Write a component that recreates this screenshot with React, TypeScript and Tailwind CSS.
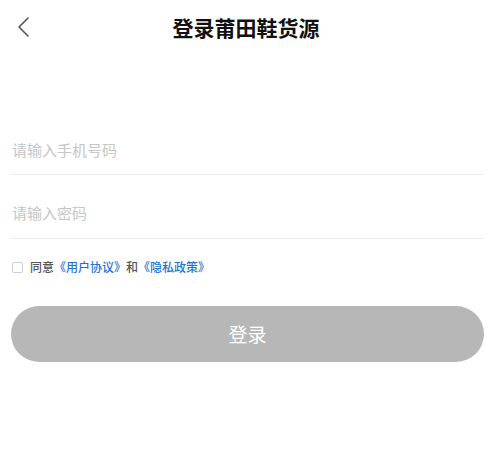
import { useState } from 'react'

const font = { fontFamily: '"Noto Sans CJK SC", "Noto Sans", sans-serif' }

function BackIcon() {
  return (
    <svg width="14" height="22" viewBox="0 0 14 22" fill="none" aria-hidden>
      <path d="M12 2 L3 11 L12 20" stroke="#555" strokeWidth="1.6" strokeLinecap="round" strokeLinejoin="round" />
    </svg>
  )
}

export default function App() {
  const [agree, setAgree] = useState(false)

  return (
    <div className="w-[500px] h-[468px] bg-white" style={font}>
      <header className="relative flex h-[54px] items-center justify-center">
        <button className="absolute left-[16px] top-[16px]" aria-label="返回">
          <BackIcon />
        </button>
        <h1 className="pr-[8px] text-[21px] font-bold leading-none text-[#111]">登录莆田鞋货源</h1>
      </header>

      <form className="ml-[11px] mr-[16px] mt-[86px]" onSubmit={e => e.preventDefault()}>
        <div className="border-b border-[#ececec] pb-[14px]">
          <input
            className="block h-[20px] w-full pl-[1px] text-[15px] leading-[20px] text-[#333] outline-none placeholder:text-[#c6c6c6]"
            placeholder="请输入手机号码"
          />
        </div>
        <div className="border-b border-[#ececec] pt-[28px] pb-[15px]">
          <input
            type="password"
            className="block h-[20px] w-full pl-[1px] text-[15px] leading-[20px] text-[#333] outline-none placeholder:text-[#c6c6c6]"
            placeholder="请输入密码"
          />
        </div>

        <label className="mt-[20px] flex items-center gap-[7px] text-[12px] font-medium leading-[16px] text-[#555]">
          <span
            onClick={() => setAgree(!agree)}
            className={`ml-[1px] block h-[11px] w-[11px] rounded-[2px] border ${agree ? 'border-[#1a73d9] bg-[#1a73d9]' : 'border-[#cfcfcf]'}`}
          />
          <span>
            同意<span className="text-[#1f74d6]">《用户协议》</span>和<span className="text-[#1f74d6]">《隐私政策》</span>
          </span>
        </label>

        <button
          type="submit"
          className="mt-[31px] flex h-[56px] w-full items-center justify-center rounded-full bg-[#b7b7b7] text-[19px] text-white"
        >
          登录
        </button>
      </form>
    </div>
  )
}
